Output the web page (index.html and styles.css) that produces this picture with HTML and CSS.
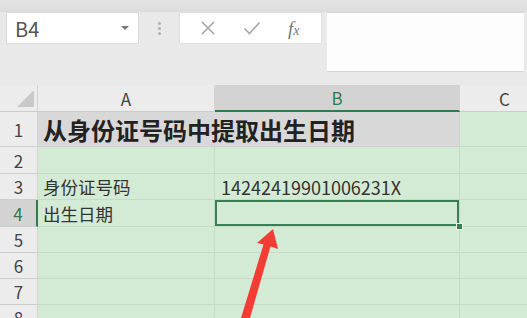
FILE: index.html
```html
<!DOCTYPE html>
<html lang="zh-CN">
<head>
  <meta charset="UTF-8" />
  <title>从身份证号码中提取出生日期</title>
  <link rel="stylesheet" href="styles.css">
</head>
<body>
  <div class="top-strip"></div>

  <div class="toolbar">
    <div class="name-box">
      <span>B4</span>
      <span class="caret"></span>
    </div>
    <div class="grip">
      <i></i><i></i><i></i>
    </div>
    <div class="fx-box">
      <svg class="tool-icon" width="16" height="16" viewBox="0 0 16 16">
        <path d="M2 2 L14 14 M14 2 L2 14" stroke="#a6a6a6" stroke-width="1.6" fill="none" />
      </svg>
      <svg class="tool-icon" width="18" height="16" viewBox="0 0 18 16">
        <path d="M1.5 8.5 L6.5 13.5 L16.5 2.5" stroke="#a6a6a6" stroke-width="1.6" fill="none" />
      </svg>
      <span class="fx">f<small>x</small></span>
    </div>
    <div class="formula"></div>
  </div>

  <div class="sheet">
    <!-- header row -->
    <div class="corner"><span></span></div>
    <div class="col-head">A</div>
    <div class="col-head active">B</div>
    <div class="col-head">C</div>

    <!-- row 1: title spills over A and B -->
    <div class="row-head">1</div>
    <div class="cell title">从身份证号码中提取出生日期</div>
    <div class="cell"></div>

    <div class="row-head">2</div>
    <div class="cell"></div>
    <div class="cell"></div>
    <div class="cell"></div>

    <div class="row-head">3</div>
    <div class="cell">身份证号码</div>
    <div class="cell num">14242419901006231X</div>
    <div class="cell"></div>

    <div class="row-head active">4</div>
    <div class="cell">出生日期</div>
    <div class="cell selected"></div>
    <div class="cell"></div>

    <div class="row-head">5</div>
    <div class="cell"></div>
    <div class="cell"></div>
    <div class="cell"></div>

    <div class="row-head">6</div>
    <div class="cell"></div>
    <div class="cell"></div>
    <div class="cell"></div>

    <div class="row-head">7</div>
    <div class="cell"></div>
    <div class="cell"></div>
    <div class="cell"></div>

    <div class="row-head">8</div>
    <div class="cell"></div>
    <div class="cell"></div>
    <div class="cell"></div>
  </div>

  <svg class="arrow" width="527" height="318" viewBox="0 0 527 318">
    <polygon points="273,229 278,249 270.5,246.5 250,318 241,318 263.5,244.5 257,243" fill="#f23c34" />
  </svg>
</body>
</html>
```

FILE: styles.css
```css
body {
  margin: 0;
  width: 527px;
  height: 318px;
  overflow: hidden;
  position: relative;
  background: #e9e9e9;
  font-family: "Noto Sans CJK SC", "Noto Sans", sans-serif;
  color: #333;
}

.top-strip {
  height: 12px;
  background: linear-gradient(#e4e4e4, #dcdcdc);
}

/* toolbar / formula bar */
.toolbar {
  display: flex;
  align-items: flex-start;
  height: 60px;
  padding-left: 6px;
  margin-bottom: 13px;
}

.name-box {
  width: 133px;
  height: 32px;
  box-sizing: border-box;
  border: 1px solid #dadada;
  background: #fff;
  display: flex;
  align-items: center;
  justify-content: space-between;
  padding: 0 9px 0 8px;
  font-size: 20px;
  color: #555;
}

.caret {
  width: 0;
  height: 0;
  border-left: 4px solid transparent;
  border-right: 4px solid transparent;
  border-top: 4px solid #777;
}

.grip {
  width: 40px;
  height: 32px;
  display: flex;
  flex-direction: column;
  align-items: center;
  justify-content: center;
  gap: 2px;
}

.grip i {
  width: 3px;
  height: 3px;
  border-radius: 50%;
  background: #b0b0b0;
}

.fx-box {
  width: 143px;
  height: 32px;
  box-sizing: border-box;
  background: #fff;
  border: 1px solid #e0e0e0;
  display: flex;
  align-items: center;
  justify-content: space-around;
  padding: 0 8px 0 6px;
}

.fx {
  font-family: "Liberation Serif", serif;
  font-style: italic;
  font-size: 19px;
  color: #777;
  line-height: 1;
}

.fx small {
  font-size: 14px;
}

.formula {
  flex: 1;
  height: 60px;
  margin-left: 5px;
  margin-right: 3px;
  background: #fdfdfd;
  border-top: 1px solid #d6d6d6;
  border-bottom: 1px solid #d6d6d6;
  box-sizing: border-box;
}

/* sheet grid */
.sheet {
  display: grid;
  grid-template-columns: 38px 177px 245px 90px;
  grid-template-rows: 27px 35px 27px 26px 27px 26px 26px 26px 26px;
}

.corner,
.col-head,
.row-head {
  background: #ececec;
  box-sizing: border-box;
  border-right: 1px solid #d4d4d4;
  border-bottom: 1px solid #cdcdcd;
  font-size: 17px;
  color: #444;
  display: flex;
  align-items: center;
  justify-content: center;
}

.corner {
  position: relative;
}

.corner span {
  position: absolute;
  right: 3px;
  bottom: 4px;
  width: 0;
  height: 0;
  border-left: 17px solid transparent;
  border-bottom: 17px solid #c9c9c9;
}

.col-head.active {
  background: #d3d3d3;
  color: #2f7a4e;
  border-bottom: 2px solid #2f7a4e;
}

.row-head.active {
  background: #d3d3d3;
  color: #2f7a4e;
  border-right: 2px solid #2f7a4e;
}

.cell {
  background: #d3ead5;
  box-sizing: border-box;
  border-right: 1px solid #c4dbc6;
  border-bottom: 1px solid #c4dbc6;
  font-size: 17.5px;
  color: #333;
  display: flex;
  align-items: center;
  padding-left: 5px;
  white-space: nowrap;
}

.cell.title {
  grid-column: span 2;
  background: #d8d8d8;
  border-right-color: #d0d0d0;
  border-bottom-color: #d0d0d0;
  font-size: 24px;
  font-weight: bold;
  color: #222;
}

.cell.num {
  font-size: 18px;
  padding-left: 6px;
}

.cell.selected {
  position: relative;
  box-shadow: inset 0 0 0 2px #3b7d55;
}

.cell.selected::after {
  content: "";
  position: absolute;
  right: -4px;
  bottom: -4px;
  width: 5px;
  height: 5px;
  background: #3b7d55;
  border: 1px solid #e6f2e7;
  z-index: 2;
}

.arrow {
  position: absolute;
  left: 0;
  top: 0;
}
```
